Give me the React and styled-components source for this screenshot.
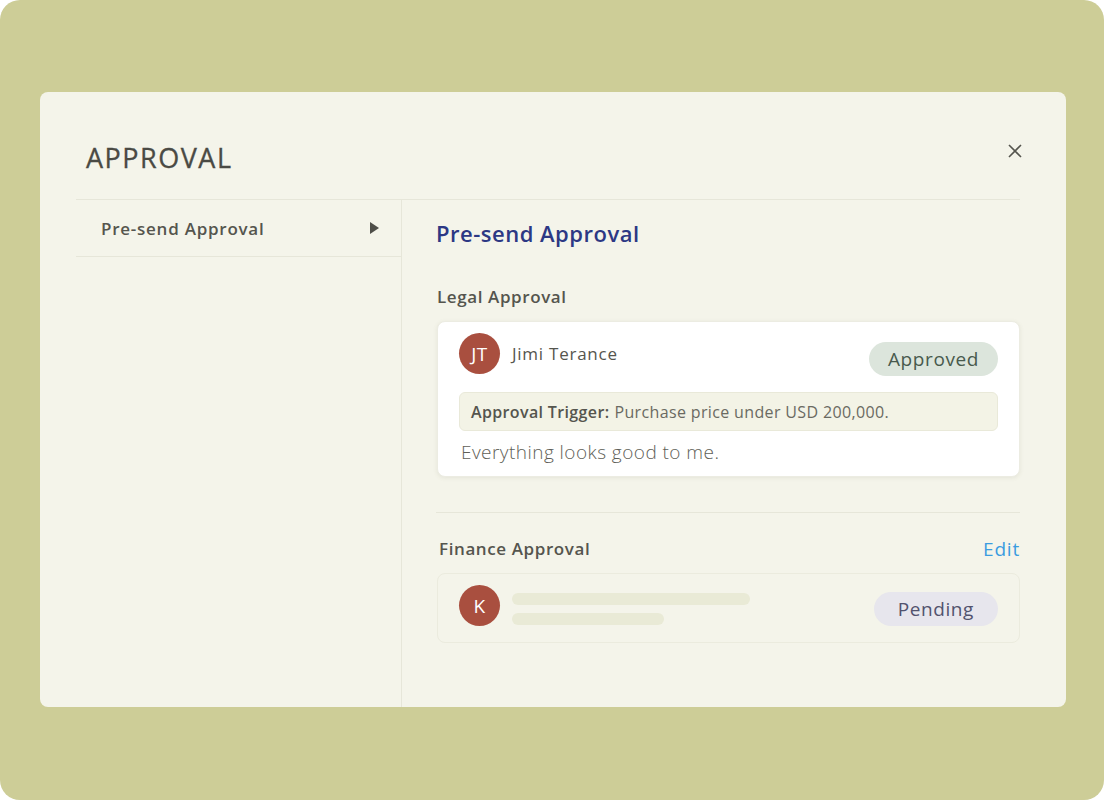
import React from 'react'
import styled, { createGlobalStyle } from 'styled-components'

const GlobalStyle = createGlobalStyle`
  body {
    margin: 0;
    background: #ffffff;
    font-family: "Open Sans", Lato, sans-serif;
  }
`

const Stage = styled.div`
  width: 1104px;
  height: 800px;
  box-sizing: border-box;
  padding: 92px 38px 93px 40px;
  background: #cdcd97;
  border-radius: 20px;
  display: flex;
`

const Modal = styled.div`
  flex: 1;
  display: flex;
  flex-direction: column;
  background: #f4f4ea;
  border-radius: 8px;
  padding: 0 46px 0 36px;
`

const Header = styled.header`
  height: 108px;
  box-sizing: border-box;
  padding: 50px 0 0 10px;
  display: flex;
  justify-content: space-between;
  align-items: flex-start;
  border-bottom: 1px solid #e6e6d9;
`

const Title = styled.h1`
  margin: 0;
  font-size: 27px;
  line-height: 32px;
  font-weight: 500;
  letter-spacing: 1.5px;
  color: #4a4a44;
  -webkit-text-stroke: 0.3px #4a4a44;
`

const CloseButton = styled.button`
  border: 0;
  background: none;
  padding: 0;
  margin: 1px -3px 0 0;
  width: 16px;
  height: 16px;
  color: #55554e;
  cursor: pointer;
`

const Body = styled.div`
  flex: 1;
  display: flex;
`

const Sidebar = styled.nav`
  width: 325px;
  border-right: 1px solid #e6e6d9;
`

const NavItem = styled.div`
  height: 57px;
  box-sizing: border-box;
  padding: 0 22px 0 25px;
  display: flex;
  align-items: center;
  justify-content: space-between;
  border-bottom: 1px solid #e6e6d9;
  font-size: 17px;
  font-weight: 600;
  letter-spacing: 0.75px;
  color: #55554e;
`

const Caret = styled.span`
  width: 0;
  height: 0;
  border-top: 6px solid transparent;
  border-bottom: 6px solid transparent;
  border-left: 9px solid #4e4e48;
`

const Main = styled.main`
  flex: 1;
  padding: 19px 0 0 34px;
`

const Heading = styled.h2`
  margin: 0;
  font-size: 22px;
  line-height: 28px;
  font-weight: 600;
  letter-spacing: 0.5px;
  color: #2c3884;
`

const SectionRow = styled.div`
  margin: ${p => p.$top}px 0 0 ${p => p.$indent}px;
  display: flex;
  justify-content: space-between;
  align-items: center;
  line-height: 24px;
`

const SectionLabel = styled.h3`
  margin: 0;
  font-size: 17px;
  font-weight: 600;
  letter-spacing: 0.6px;
  color: #55554e;
`

const EditLink = styled.a`
  font-size: 19px;
  letter-spacing: 0.8px;
  color: #3b9ce0;
  cursor: pointer;
`

const Card = styled.div`
  margin: ${p => p.$top}px 0 0 1px;
  padding: 11px 21px ${p => p.$pending ? 16 : 12}px;
  border-radius: 8px;
  background: ${p => p.$pending ? '#f4f4ea' : '#ffffff'};
  border: 1px solid ${p => p.$pending ? '#ebebde' : '#ecece2'};
  box-shadow: ${p => p.$pending ? 'none' : '0 1px 4px rgba(120, 120, 90, 0.12)'};
`

const CardTop = styled.div`
  display: flex;
  align-items: flex-start;
  gap: 12px;
`

const Avatar = styled.div`
  width: 41px;
  height: 41px;
  flex: none;
  border-radius: 50%;
  background: #a94f3f;
  color: #ffffff;
  font-size: 19px;
  letter-spacing: 0.5px;
  display: flex;
  align-items: center;
  justify-content: center;
`

const Name = styled.div`
  flex: 1;
  font-size: 17px;
  line-height: 22px;
  margin-top: 10px;
  letter-spacing: 0.75px;
  color: #55554e;
`

const Badge = styled.span`
  margin-top: ${p => p.$top}px;
  height: 34px;
  padding: 0 ${p => p.$tone === 'pending' ? 24 : 19}px;
  border-radius: 17px;
  display: flex;
  align-items: center;
  font-size: 19px;
  letter-spacing: 0.6px;
  background: ${p => p.$tone === 'pending' ? '#e7e6ed' : '#dce5dc'};
  color: ${p => p.$tone === 'pending' ? '#52536e' : '#485a4d'};
`

const Trigger = styled.div`
  margin-top: 16px;
  height: 39px;
  box-sizing: border-box;
  padding: 0 11px;
  display: flex;
  align-items: center;
  border-radius: 6px;
  background: #f3f3e6;
  border: 1px solid #e9e9d9;
  font-size: 16px;
  letter-spacing: 0.36px;
  color: #6a6a62;
`

const TriggerKey = styled.strong`
  font-weight: 600;
  color: #55554e;
  margin-right: 5px;
`

const Comment = styled.p`
  margin: 9px 0 0 2px;
  font-size: 19px;
  line-height: 24px;
  font-weight: 300;
  letter-spacing: 0.45px;
  color: #5f5f58;
`

const Divider = styled.hr`
  margin: 35px 0 0;
  border: 0;
  border-top: 1px solid #e6e6d9;
`

const Skeleton = styled.div`
  flex: 1;
  display: flex;
  flex-direction: column;
  gap: 8px;
  margin-top: 8px;
`

const SkeletonLine = styled.div`
  width: ${p => p.$width}px;
  height: 12px;
  border-radius: 6px;
  background: #e9ead6;
`

export default function App() {
  return (
    <>
      <GlobalStyle />
      <Stage>
        <Modal>
          <Header>
            <Title>APPROVAL</Title>
            <CloseButton aria-label="Close">
              <svg width="16" height="16" viewBox="0 0 16 16" fill="none" stroke="currentColor" strokeWidth="1.6">
                <path d="M2 2 L14 14 M14 2 L2 14" />
              </svg>
            </CloseButton>
          </Header>
          <Body>
            <Sidebar>
              <NavItem>
                Pre-send Approval
                <Caret />
              </NavItem>
            </Sidebar>
            <Main>
              <Heading>Pre-send Approval</Heading>

              <SectionRow $top={38} $indent={1}>
                <SectionLabel>Legal Approval</SectionLabel>
              </SectionRow>
              <Card $top={12}>
                <CardTop>
                  <Avatar>JT</Avatar>
                  <Name>Jimi Terance</Name>
                  <Badge $top={9}>Approved</Badge>
                </CardTop>
                <Trigger>
                  <TriggerKey>Approval Trigger:</TriggerKey>
                  Purchase price under USD 200,000.
                </Trigger>
                <Comment>Everything looks good to me.</Comment>
              </Card>

              <Divider />

              <SectionRow $top={24} $indent={3}>
                <SectionLabel>Finance Approval</SectionLabel>
                <EditLink>Edit</EditLink>
              </SectionRow>
              <Card $top={12} $pending>
                <CardTop>
                  <Avatar>K</Avatar>
                  <Skeleton>
                    <SkeletonLine $width={238} />
                    <SkeletonLine $width={152} />
                  </Skeleton>
                  <Badge $top={7} $tone="pending">Pending</Badge>
                </CardTop>
              </Card>
            </Main>
          </Body>
        </Modal>
      </Stage>
    </>
  )
}
